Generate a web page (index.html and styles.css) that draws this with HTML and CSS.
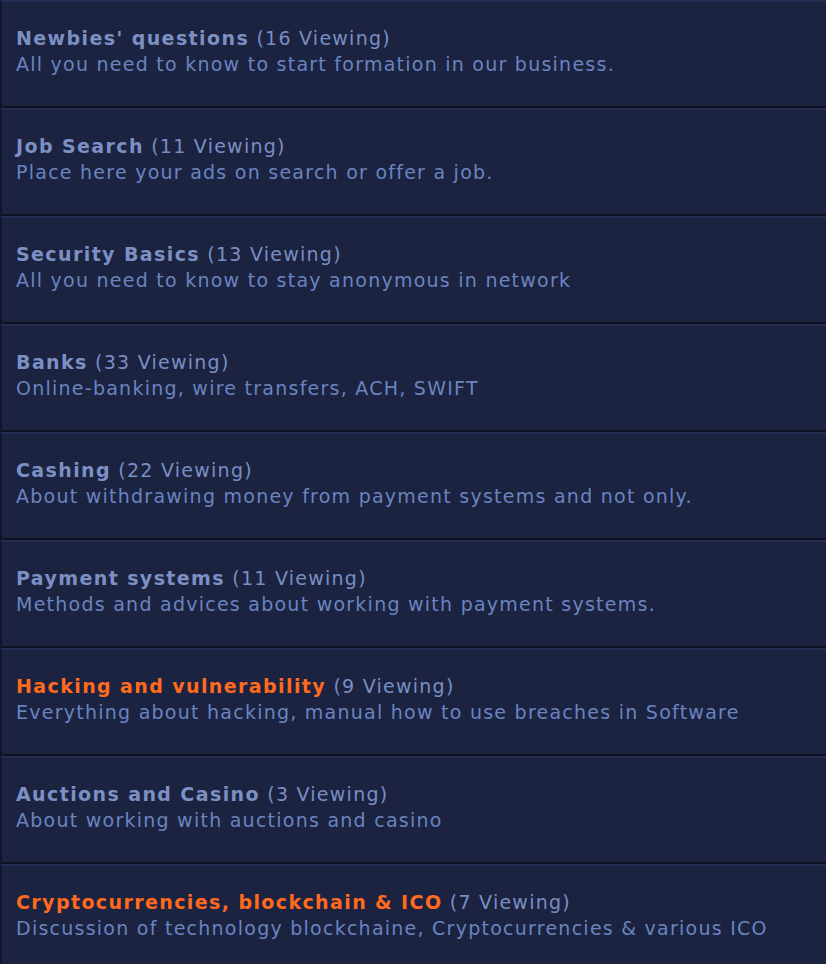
FILE: index.html
```html
<!DOCTYPE html>
<html>
<head>
<meta charset="utf-8">
<link rel="stylesheet" href="styles.css">
</head>
<body>
<div class="forum-list">
  <div class="forum-row">
    <div class="forum-head"><a class="forum-title">Newbies' questions</a> <span class="viewing">(16 Viewing)</span></div>
    <div class="forum-desc">All you need to know to start formation in our business.</div>
  </div>
  <div class="forum-row">
    <div class="forum-head"><a class="forum-title">Job Search</a> <span class="viewing">(11 Viewing)</span></div>
    <div class="forum-desc">Place here your ads on search or offer a job.</div>
  </div>
  <div class="forum-row">
    <div class="forum-head"><a class="forum-title">Security Basics</a> <span class="viewing">(13 Viewing)</span></div>
    <div class="forum-desc">All you need to know to stay anonymous in network</div>
  </div>
  <div class="forum-row">
    <div class="forum-head"><a class="forum-title">Banks</a> <span class="viewing">(33 Viewing)</span></div>
    <div class="forum-desc">Online-banking, wire transfers, ACH, SWIFT</div>
  </div>
  <div class="forum-row">
    <div class="forum-head"><a class="forum-title">Cashing</a> <span class="viewing">(22 Viewing)</span></div>
    <div class="forum-desc">About withdrawing money from payment systems and not only.</div>
  </div>
  <div class="forum-row">
    <div class="forum-head"><a class="forum-title">Payment systems</a> <span class="viewing">(11 Viewing)</span></div>
    <div class="forum-desc">Methods and advices about working with payment systems.</div>
  </div>
  <div class="forum-row">
    <div class="forum-head"><a class="forum-title hot">Hacking and vulnerability</a> <span class="viewing">(9 Viewing)</span></div>
    <div class="forum-desc">Everything about hacking, manual how to use breaches in Software</div>
  </div>
  <div class="forum-row">
    <div class="forum-head"><a class="forum-title">Auctions and Casino</a> <span class="viewing">(3 Viewing)</span></div>
    <div class="forum-desc">About working with auctions and casino</div>
  </div>
  <div class="forum-row">
    <div class="forum-head"><a class="forum-title hot">Cryptocurrencies, blockchain &amp; ICO</a> <span class="viewing">(7 Viewing)</span></div>
    <div class="forum-desc">Discussion of technology blockchaine, Cryptocurrencies &amp; various ICO</div>
  </div>
</div>
</body>
</html>
```
FILE: styles.css
```css
html, body {
  margin: 0;
  padding: 0;
  background: #1b2340;
}
body {
  font-family: "DejaVu Sans", Verdana, sans-serif;
  font-size: 19px;
  line-height: 26px;
  letter-spacing: 1.25px;
  color: #6a84c0;
}
.forum-list {
  display: flex;
  flex-direction: column;
}
.forum-row {
  box-sizing: border-box;
  height: 108px;
  padding: 23px 10px 0 14px;
  background: #1b2340;
  border-top: 2px solid #262d52;
  border-bottom: 2px solid #0e1222;
  border-left: 2px solid #11162c;
  white-space: nowrap;
}
.forum-title {
  font-weight: bold;
  letter-spacing: 1.4px;
  color: #7d90c4;
  text-decoration: none;
}
.forum-title.hot {
  color: #ff6a1e;
}
.viewing {
  color: #7a8ec4;
}
.forum-desc {
  color: #6a84c0;
}
```
